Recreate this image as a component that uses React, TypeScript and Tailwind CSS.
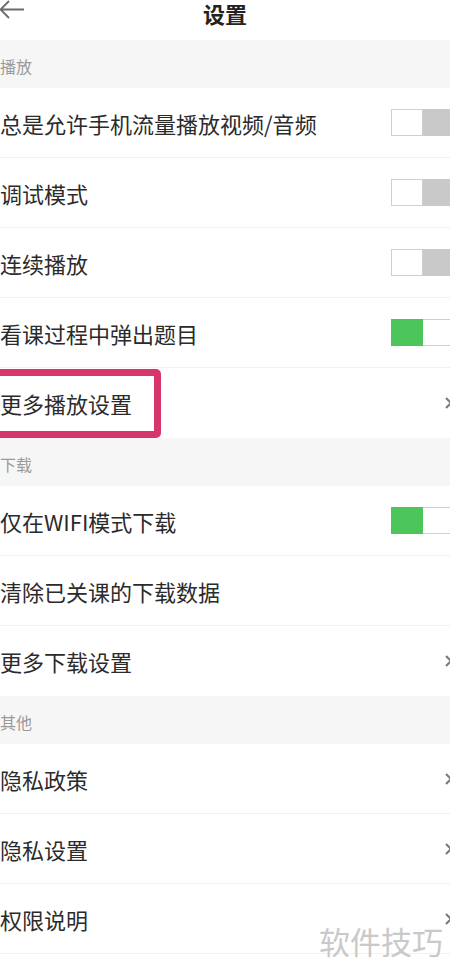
import type { ReactNode } from "react";

type Item = {
  label: string;
  kind: "off" | "on" | "arrow" | "none";
};

const sections: { title: string; items: Item[] }[] = [
  {
    title: "播放",
    items: [
      { label: "总是允许手机流量播放视频/音频", kind: "off" },
      { label: "调试模式", kind: "off" },
      { label: "连续播放", kind: "off" },
      { label: "看课过程中弹出题目", kind: "on" },
      { label: "更多播放设置", kind: "arrow" },
    ],
  },
  {
    title: "下载",
    items: [
      { label: "仅在WIFI模式下载", kind: "on" },
      { label: "清除已关课的下载数据", kind: "none" },
      { label: "更多下载设置", kind: "arrow" },
    ],
  },
  {
    title: "其他",
    items: [
      { label: "隐私政策", kind: "arrow" },
      { label: "隐私设置", kind: "arrow" },
      { label: "权限说明", kind: "arrow" },
      { label: "检查更新 当前版本", kind: "none" },
    ],
  },
];

// square two-part switch, right half runs off the screen edge
const Toggle = ({ on }: { on: boolean }) => (
  <div className="flex h-[27px] w-[64px] -mr-[5px] shrink-0">
    {on ? (
      <>
        <div className="w-[32px] bg-[#4cc55a]" />
        <div className="flex-1 border border-l-0 border-[#cfcfcf] bg-white" />
      </>
    ) : (
      <>
        <div className="w-[32px] border border-[#cfcfcf] bg-white" />
        <div className="flex-1 bg-[#c9c9c9]" />
      </>
    )}
  </div>
);

const Chevron = () => (
  <svg width="10" height="14" viewBox="0 0 10 14" className="-mr-[4px] shrink-0">
    <path d="M2 2 L7 7 L2 12" fill="none" stroke="#7a7a7a" strokeWidth="2.2" />
  </svg>
);

const Row = ({ item, last }: { item: Item; last: boolean }) => {
  let right: ReactNode = null;
  if (item.kind === "on") right = <Toggle on />;
  if (item.kind === "off") right = <Toggle on={false} />;
  if (item.kind === "arrow") right = <Chevron />;

  return (
    <div
      className={`flex h-[70px] items-center justify-between bg-white ${
        last ? "" : "border-b border-[#f1f1f1]"
      }`}
    >
      <span className="text-[22px] leading-[30px] text-[#2b2b2b]">{item.label}</span>
      {right}
    </div>
  );
};

export default function App() {
  return (
    <div
      className="relative h-[976px] w-[450px] overflow-hidden bg-white"
      style={{ fontFamily: '"Noto Sans CJK SC", "Noto Sans", sans-serif' }}
    >
      {/* header */}
      <div className="relative flex h-[40px] items-start justify-center bg-white">
        <svg
          width="28"
          height="22"
          viewBox="0 0 28 22"
          className="absolute -left-[2px] top-0"
        >
          <path
            d="M26 9.5 H3 M11 1 L2.5 9.5 L11 18"
            fill="none"
            stroke="#6b6b6b"
            strokeWidth="1.8"
          />
        </svg>
        <span className="text-[22px] font-bold leading-[26px] text-[#222]">
          设置
        </span>
      </div>

      {/* sections */}
      {sections.map((section) => (
        <div key={section.title}>
          <div className="flex h-[48px] items-center bg-[#f6f6f6] pt-[4px]">
            <span className="text-[16px] text-[#9a9a9a]">{section.title}</span>
          </div>
          {section.items.map((item, i) => (
            <Row
              key={item.label}
              item={item}
              last={i === section.items.length - 1}
            />
          ))}
        </div>
      ))}

      {/* annotation box */}
      <div className="absolute -left-[12px] top-[369px] h-[69px] w-[173px] rounded-[5px] border-[7px] border-[#d8356f]" />

      {/* watermark */}
      <div className="absolute left-[319px] top-[918px] text-[31px] text-[#c4c4c4] opacity-90">
        软件技巧
      </div>
    </div>
  );
}
